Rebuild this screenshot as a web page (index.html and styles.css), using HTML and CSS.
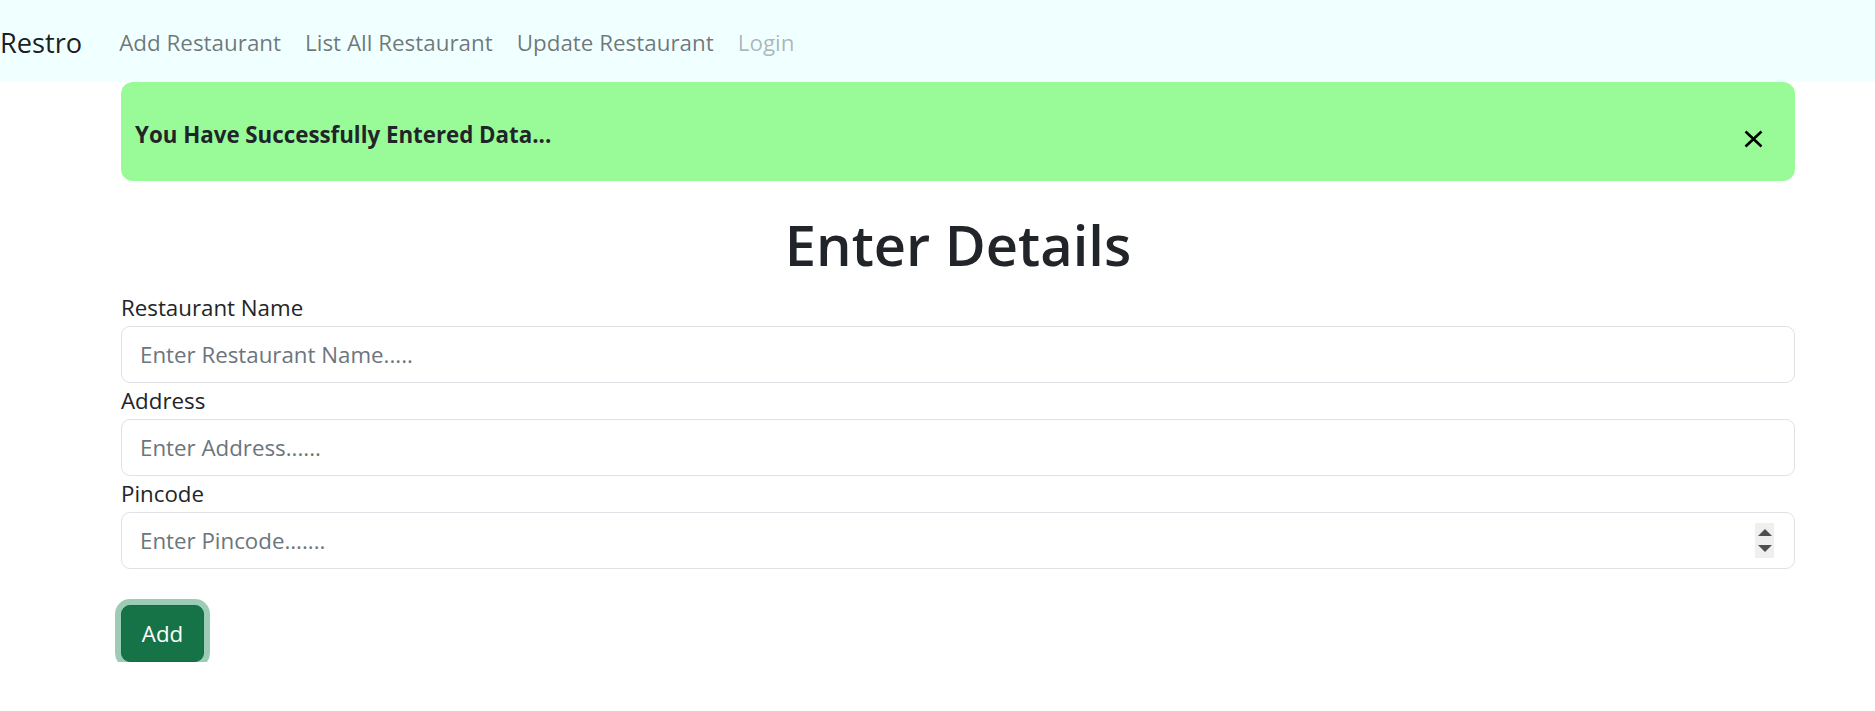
FILE: index.html
```html
<!DOCTYPE html>
<html lang="en">
<head>
<meta charset="utf-8">
<title>Restro</title>
<link rel="stylesheet" href="styles.css">
</head>
<body>
<nav class="navbar">
  <a class="brand" href="#">Restro</a>
  <a class="nav-link" href="#">Add Restaurant</a>
  <a class="nav-link" href="#">List All Restaurant</a>
  <a class="nav-link" href="#">Update Restaurant</a>
  <a class="nav-link disabled" href="#">Login</a>
</nav>
<main class="container">
  <div class="alert">
    <strong class="alert-text">You Have Successfully Entered Data...</strong>
    <button class="btn-close" type="button" aria-label="Close">
      <svg viewBox="0 0 19 18" width="19" height="18"><path d="M1.5 1.5 L17.5 16.5 M17.5 1.5 L1.5 16.5" stroke="#000" stroke-width="2.6" fill="none"/></svg>
    </button>
  </div>
  <h1 class="title">Enter Details</h1>
  <form class="form">
    <label class="form-label">Restaurant Name</label>
    <input class="form-control" type="text" placeholder="Enter Restaurant Name.....">
    <label class="form-label">Address</label>
    <input class="form-control" type="text" placeholder="Enter Address......">
    <label class="form-label">Pincode</label>
    <div class="number-wrap">
      <input class="form-control" type="text" placeholder="Enter Pincode.......">
      <span class="spinner"><span class="tri up"></span><span class="tri down"></span></span>
    </div>
    <div class="actions">
      <button class="btn-add" type="button">Add</button>
    </div>
  </form>
</main>
</body>
</html>
```
FILE: styles.css
```css
* { box-sizing: border-box; }
html, body { margin: 0; padding: 0; background: #fff; }
body {
  font-family: "Open Sans", "Noto Sans", sans-serif;
  font-size: 22.3px;
  color: #212529;
}
.navbar {
  background: #f0ffff;
  height: 82px;
  display: flex;
  align-items: center;
  padding-top: 3px;
}
.brand {
  font-size: 27.2px;
  color: rgba(0,0,0,.9);
  text-decoration: none;
  margin-right: 25px;
  line-height: 45px;
}
.nav-link {
  color: rgba(0,0,0,.55);
  text-decoration: none;
  padding: 0 12px;
  line-height: 36px;
  font-size: 22.4px;
}
.nav-link.disabled { color: rgba(0,0,0,.3); }
.container {
  margin-left: 121px;
  width: 1674px;
}
.alert {
  position: relative;
  background: #98fb98;
  border-radius: 12px;
  height: 99px;
  display: flex;
  align-items: center;
  padding: 5px 32px 0 14px;
  margin-bottom: 25px;
}
.alert-text { font-weight: 700; }
.btn-close {
  margin-left: auto;
  margin-top: 10px;
  background: none;
  border: 0;
  padding: 0;
  width: 19px;
  height: 18px;
  display: flex;
}
.title {
  margin: 0 0 10px;
  padding-top: 2px;
  text-align: center;
  font-size: 56px;
  font-weight: 600;
  line-height: 72px;
}
.form { display: flex; flex-direction: column; }
.form-label { line-height: 36px; }
.form-control {
  display: block;
  width: 100%;
  height: 57px;
  border: 1.5px solid #dee2e6;
  border-radius: 9px;
  padding: 0 18px;
  font: inherit;
  color: #212529;
  background: #fff;
}
.form-control::placeholder { color: #6c757d; opacity: 1; }
.number-wrap { position: relative; }
.spinner {
  position: absolute;
  right: 21px;
  top: 11px;
  width: 19px;
  height: 35px;
  background: #efefef;
  display: flex;
  flex-direction: column;
  align-items: center;
  justify-content: center;
  gap: 9px;
}
.tri { width: 0; height: 0; border-left: 7px solid transparent; border-right: 7px solid transparent; }
.tri.up { border-bottom: 7px solid #4f4f4f; }
.tri.down { border-top: 7px solid #4f4f4f; }
.actions { margin-top: 36px; }
.btn-add {
  height: 57px;
  width: 83px;
  background: #157347;
  border: 1.5px solid #146c43;
  border-radius: 9px;
  color: #fff;
  font: inherit;
  box-shadow: 0 0 0 6px rgba(60,153,110,.5);
  padding: 0;
}
```
